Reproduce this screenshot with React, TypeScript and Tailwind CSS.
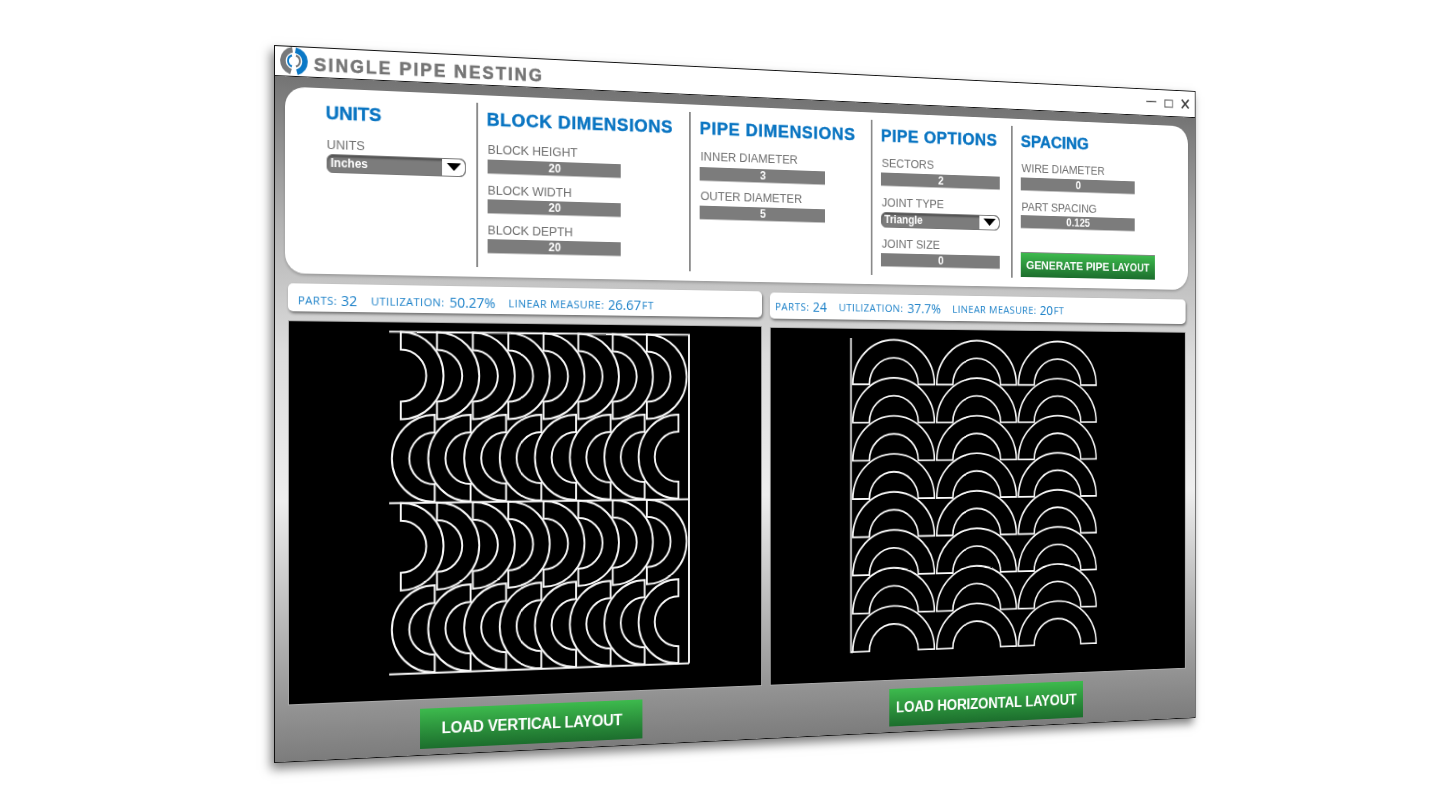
const sans = "font-['Liberation_Sans',Arial,sans-serif]";

// half rings, coordinates are relative to each black canvas
function halfRing(x: number, cy: number, R: number, r: number, dir: 1 | -1) {
  const sweepOuter = dir === 1 ? 1 : 0;
  const sweepInner = dir === 1 ? 0 : 1;
  return `M${x} ${cy - R}A${R} ${R} 0 0 ${sweepOuter} ${x} ${cy + R}L${x} ${cy + r}A${r} ${r} 0 0 ${sweepInner} ${x} ${cy - r}Z`;
}

function arch(cx: number, base: number, R: number, r: number) {
  return `M${cx - R} ${base}A${R} ${R} 0 0 1 ${cx + R} ${base}L${cx + r} ${base}A${r} ${r} 0 0 0 ${cx - r} ${base}Z`;
}

const eight = [0, 1, 2, 3, 4, 5, 6, 7];

function VerticalNest() {
  return (
    <svg viewBox="1 1 507 384" className="block w-full h-full" fill="none" stroke="#fafafa" strokeWidth="2">
      <path d="M103 10.6H426V358.7M103 184.8H426M103 358.7H426" />
      {[0, 174.2].map((dy) =>
        eight.map((i) => (
          <g key={`${dy}-${i}`}>
            <path d={halfRing(115 + i * 37.7, 55 + dy, 44.5, 26.5, 1)} />
            <path d={halfRing(150.3 + i * 37.7, 139.6 + dy, 44.5, 26.5, -1)} />
          </g>
        ))
      )}
    </svg>
  );
}

function HorizontalNest() {
  return (
    <svg viewBox="1 1 508 383" className="block w-full h-full" fill="none" stroke="#fafafa" strokeWidth="1.9">
      <path d="M94.6 11V352.3H97" />
      {eight.map((row) =>
        [145.5, 245.8, 346].map((cx) => <path key={`${row}-${cx}`} d={arch(cx, 61.3 + row * 41.55, 48.8, 29.2)} />)
      )}
    </svg>
  );
}

function Logo() {
  return (
    <svg viewBox="0 0 28 28" className="w-[28px] h-[28px] shrink-0 ml-[5px]" fill="none">
      <path d="M12.5 2.8A11.3 11.3 0 0 0 11 24.8" stroke="#77797b" strokeWidth="5.6" />
      <path d="M15.5 3.2A11.3 11.3 0 0 1 17 25.2" stroke="#0a78c6" strokeWidth="5.6" />
      <path d="M12 8.5A5.8 5.8 0 0 0 12 19.5" stroke="#0a78c6" strokeWidth="1.9" />
      <path d="M16 8.5A5.8 5.8 0 0 1 16 19.5" stroke="#77797b" strokeWidth="1.9" />
    </svg>
  );
}

function WindowControls() {
  return (
    <div className="ml-auto mr-[7px] mt-[9px] flex gap-[10px] items-start">
      <svg width="13" height="11" viewBox="0 0 13 11" stroke="#555" strokeWidth="1.4">
        <path d="M0 4.5H13" />
      </svg>
      <svg width="12" height="11" viewBox="0 0 12 11" fill="none" stroke="#666" strokeWidth="1.2">
        <rect x="1" y="2" width="10" height="8" />
      </svg>
      <svg width="11" height="11" viewBox="0 0 11 11" stroke="#444" strokeWidth="1.9">
        <path d="M1 .5 10 10.5M10 .5 1 10.5" />
      </svg>
    </div>
  );
}

function Heading({ children, className }: { children: string; className: string }) {
  return <h2 className={`${sans} text-[19px] leading-[22px] font-bold text-[#0a75c2] whitespace-nowrap [-webkit-text-stroke:0.4px_#0a75c2] ${className}`}>{children}</h2>;
}

function Label({ children, className = '' }: { children: string; className?: string }) {
  return <div className={`${sans} text-[13px] leading-[16px] text-[#6e6e6e] whitespace-nowrap ml-[1px] ${className}`}>{children}</div>;
}

function NumberBox({ value, className = '' }: { value: string; className?: string }) {
  return (
    <div className={`${sans} w-[144px] h-[15px] bg-[#7c7c7c] text-white text-[12px] font-bold leading-none flex items-center justify-center border-b border-b-[#c4c4c4] ${className}`}>
      {value}
    </div>
  );
}

function SelectBox({ value, className }: { value: string; className: string }) {
  return (
    <div className={`${sans} flex w-[144px] rounded-[6px] overflow-hidden border border-[#777] bg-[#7c7c7c] shadow-[inset_0_2px_2px_rgba(0,0,0,0.35)] ${className}`}>
      <div className="flex-1 pl-[3px] flex items-center text-white text-[12px] font-bold">{value}</div>
      <div className="w-[24px] bg-white flex items-center justify-center rounded-r-[6px]">
        <svg width="15" height="8" viewBox="0 0 15 8">
          <polygon points="0,0 15,0 7.5,8" fill="#000" />
        </svg>
      </div>
    </div>
  );
}

function StatBar({ parts, utilization, measure, className }: { parts: string; utilization: string; measure: string; className: string }) {
  const label = 'text-[11.5px] font-medium tracking-[0.45px]';
  const num = 'text-[14.4px]';
  return (
    <div className={`font-['Open_Sans',sans-serif] h-[28px] bg-white rounded-[5px] shadow-[1px_2px_3px_rgba(0,0,0,0.45)] flex items-center text-[#1b80c8] whitespace-nowrap ${className}`}>
      <span className={`${label} mr-[4px]`}>PARTS:</span>
      <span className={`${num} mr-[14px]`}>{parts}</span>
      <span className={`${label} mr-[5px]`}>UTILIZATION:</span>
      <span className={`${num} mr-[14px]`}>{utilization}</span>
      <span className={`${label} mr-[4px]`}>LINEAR MEASURE:</span>
      <span className={num}>{measure}</span>
      <span className={`${label} ml-[1px]`}>FT</span>
    </div>
  );
}

function LoadButton({ children, className = '' }: { children: string; className?: string }) {
  return (
    <button className={`${sans} h-[41px] bg-gradient-to-b from-[#3dba4d] to-[#1c6e2d] text-white text-[16px] font-bold leading-none whitespace-nowrap ${className}`}>
      {children}
    </button>
  );
}

export default function App() {
  return (
    <div className="w-[1432px] h-[808px] overflow-hidden bg-white pl-[274px] pt-[45px]">
      <div className="w-[1055px] h-[718px] flex flex-col border border-[#111] bg-white origin-top-left [transform:matrix3d(1.00024,0.04993,0,0.00013757,0,1,0,0,0,0,1,0,0,0,0,1)] shadow-[-3px_6px_10px_rgba(0,0,0,0.5)]">
        {/* Title bar */}
        <div className="h-[30px] shrink-0 flex items-start border-b border-[#111]">
          <Logo />
          <div className={`${sans} ml-[6px] mt-[6px] font-bold leading-[22px] text-[#757575] tracking-[2.1px] whitespace-nowrap [-webkit-text-stroke:0.5px_#757575]`}>
            <span className="text-[19px]">S</span>
            <span className="text-[18px]">INGLE </span>
            <span className="text-[19px]">P</span>
            <span className="text-[18px]">IPE </span>
            <span className="text-[19px]">N</span>
            <span className="text-[18px]">ESTING</span>
          </div>
          <WindowControls />
        </div>

        {/* Body */}
        <div className="flex-1 bg-[linear-gradient(to_bottom,#747474_0%,#b4b4b4_22%,#dcdcdc_40%,#eeeeee_62%,#9a9a9a_90%,#7c7c7c_100%)] pt-[10px]">
          <div className="ml-[10px] w-[1034px] h-[187px] bg-white rounded-[20px] shadow-[0_2px_3px_rgba(0,0,0,0.2)] flex pt-[8px] pb-[10px]">
            <div className="ml-[41px] w-[156px] pt-[6px]">
              <Heading className="">UNITS</Heading>
              <Label className="mt-[12.5px]">UNITS</Label>
              <SelectBox value="Inches" className="ml-[1px] h-[19px] mt-[1px]" />
            </div>

            <div className="w-[232px] border-l-2 border-[#8a8a8a] pl-[9px] pt-[6px]">
              <Heading className="tracking-[0.62px]">BLOCK DIMENSIONS</Heading>
              <Label className="mt-[12px]">BLOCK HEIGHT</Label>
              <NumberBox value="20" className="ml-[1px] mt-[1.5px]" />
              <Label className="mt-[9px]">BLOCK WIDTH</Label>
              <NumberBox value="20" className="ml-[1px] mt-[1.5px]" />
              <Label className="mt-[8.5px]">BLOCK DEPTH</Label>
              <NumberBox value="20" className="ml-[1px] mt-[1.5px]" />
            </div>

            <div className="w-[210px] border-l-2 border-[#8a8a8a] pl-[10px] pt-[6px]">
              <Heading className="tracking-[0.73px]">PIPE DIMENSIONS</Heading>
              <Label className="mt-[11.2px]">INNER DIAMETER</Label>
              <NumberBox value="3" className="mt-[2.4px]" />
              <Label className="mt-[8.7px]">OUTER DIAMETER</Label>
              <NumberBox value="5" className="mt-[1.7px]" />
            </div>

            <div className="w-[170px] border-l-2 border-[#8a8a8a] pl-[10px] pt-[6px]">
              <Heading className="tracking-[0.58px]">PIPE OPTIONS</Heading>
              <Label className="mt-[11.1px]">SECTORS</Label>
              <NumberBox value="2" className="mt-[2.1px]" />
              <Label className="mt-[10.2px]">JOINT TYPE</Label>
              <SelectBox value="Triangle" className="h-[17px] mt-[1.3px]" />
              <Label className="mt-[10.5px]">JOINT SIZE</Label>
              <NumberBox value="0" className="mt-[1.9px] h-[14px]" />
            </div>

            <div className="flex-1 border-l-2 border-[#8a8a8a] pl-[10px] pt-[6px]">
              <Heading className="">SPACING</Heading>
              <Label className="mt-[11.4px]">WIRE DIAMETER</Label>
              <NumberBox value="0" className="mt-[1.9px]" />
              <Label className="mt-[9.9px]">PART SPACING</Label>
              <NumberBox value="0.125" className="mt-[0.8px]" />
              <button className={`${sans} mt-[25.8px] w-[170px] h-[28px] bg-gradient-to-b from-[#3dba4d] to-[#1c6e2d] text-white text-[13px] leading-none whitespace-nowrap font-bold border-t border-[#888]`}>
                GENERATE PIPE <span className="text-[12px]">LAYOUT</span>
              </button>
            </div>
          </div>

          {/* Results */}
          <div className="ml-[13px] mt-[10px] w-[1028px] grid grid-cols-[509px_510px] gap-x-[9px]">
            <div className="flex flex-col">
              <StatBar parts="32" utilization="50.27%" measure="26.67" className="pl-[10px] pt-[6px]" />
              <div className="mt-[9px] h-[386px] bg-black border border-[#aaa]">
                <VerticalNest />
              </div>
              <LoadButton className="mt-[9px] mx-auto w-[239px] tracking-[-0.2px]">LOAD VERTICAL LAYOUT</LoadButton>
            </div>
            <div className="flex flex-col pt-[1px]">
              <StatBar parts="24" utilization="37.7%" measure="20" className="pl-[6px] pt-[2px]" />
              <div className="mt-[9px] h-[385px] bg-black border border-[#aaa]">
                <HorizontalNest />
              </div>
              <LoadButton className="mt-[9px] ml-[140px] w-[238px]">LOAD HORIZONTAL LAYOUT</LoadButton>
            </div>
          </div>
        </div>
      </div>
    </div>
  );
}
